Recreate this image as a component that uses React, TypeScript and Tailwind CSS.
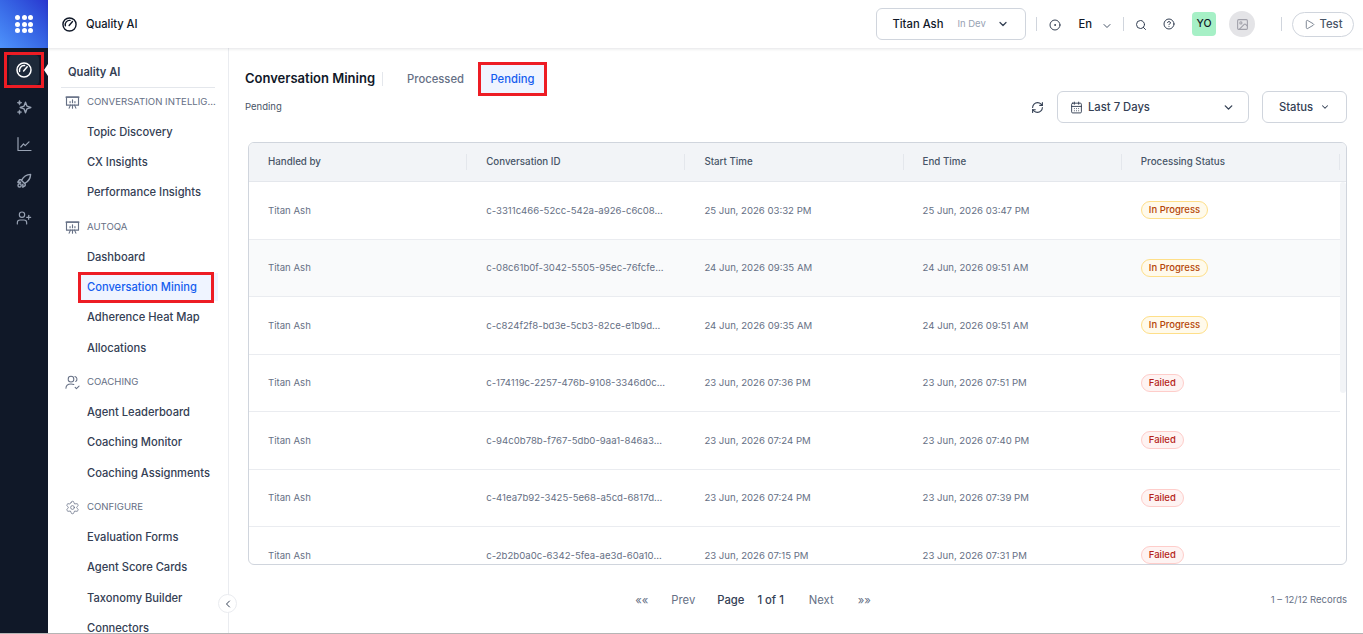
import {
  ChevronDown,
  ChevronLeft,
  CircleDot,
  CircleHelp,
  CalendarDays,
  Image,
  Play,
  RefreshCw,
  Search,
  Settings,
  UserPlus,
} from "lucide-react";

type IconProps = { className?: string };

function GaugeIcon({ className }: IconProps) {
  return (
    <svg viewBox="0 0 16 16" fill="none" stroke="currentColor" strokeWidth="1.5" strokeLinecap="round" className={className}>
      <circle cx="8" cy="8" r="7" />
      <path d="M7.6 9 11.2 4.8" />
      <path d="M3.6 9.4A4.6 4.6 0 0 1 8.6 3.6" />
    </svg>
  );
}

function SparkIcon({ className }: IconProps) {
  return (
    <svg viewBox="0 0 16 16" fill="none" stroke="currentColor" strokeWidth="1.4" strokeLinejoin="round" className={className}>
      <path d="M9.5 3.2 10.9 7.1 14.8 8.5 10.9 9.9 9.5 13.8 8.1 9.9 4.2 8.5 8.1 7.1z" />
      <path d="M3.5 1.2 4.2 3 6 3.7 4.2 4.4 3.5 6.2 2.8 4.4 1 3.7 2.8 3z" fill="currentColor" strokeWidth="0.5" />
      <path d="M3.5 10.8 4.2 12.4 5.8 13.1 4.2 13.8 3.5 15.4 2.8 13.8 1.2 13.1 2.8 12.4z" fill="currentColor" strokeWidth="0.5" />
    </svg>
  );
}

function ChartIcon({ className }: IconProps) {
  return (
    <svg viewBox="0 0 16 16" fill="none" stroke="currentColor" strokeWidth="1.2" strokeLinecap="round" strokeLinejoin="round" className={className}>
      <path d="M2 1.5V14.5H15" />
      <path d="M4.8 11 7.5 7.8 9.2 9.6 13 5.8" />
    </svg>
  );
}

function RocketIcon({ className }: IconProps) {
  return (
    <svg viewBox="0 0 16 16" fill="none" stroke="currentColor" strokeWidth="1.4" strokeLinejoin="round" className={className}>
      <path d="M14.6 1.4C10.4 1.6 7.4 3.6 5.6 7.4L8.6 10.4C12.4 8.6 14.4 5.6 14.6 1.4Z" />
      <path d="M5.8 6.8H3.4L1.8 9.2H5.2" />
      <path d="M9.2 10.2V12.6L6.8 14.2V10.8" />
      <circle cx="3.6" cy="12.4" r="1.6" />
    </svg>
  );
}

function ScreenIcon({ className }: IconProps) {
  return (
    <svg viewBox="0 0 16 16" fill="none" stroke="currentColor" strokeWidth="1.2" strokeLinecap="round" strokeLinejoin="round" className={className}>
      <path d="M1.6 2.2H14.4V10.8H1.6Z" />
      <path d="M1 2.2H15" />
      <path d="M5.4 8.2V7M8 8.2V5M10.6 8.2V7" />
      <path d="M5.8 10.8 4.4 14M8 10.8V14M10.2 10.8 11.6 14" />
    </svg>
  );
}

function CoachIcon({ className }: IconProps) {
  return (
    <svg viewBox="0 0 16 16" fill="none" stroke="currentColor" strokeWidth="1.1" strokeLinecap="round" strokeLinejoin="round" className={className}>
      <circle cx="6.4" cy="4.4" r="3" />
      <path d="M1 14.2C1 11.2 3 9.6 6.4 9.6C7.6 9.6 8.6 9.8 9.4 10.2" />
      <path d="M10.6 1.6A3 3 0 0 1 11.4 7" />
      <path d="M10.8 13.2 12.2 14.6 15 11.8" />
    </svg>
  );
}

const sections = [
  { title: "CONVERSATION INTELLIG...", icon: <ScreenIcon className="w-[15px] h-[15px] shrink-0 text-[#667085]" />, items: ["Topic Discovery", "CX Insights", "Performance Insights"] },
  { title: "AUTOQA", icon: <ScreenIcon className="w-[15px] h-[15px] shrink-0 text-[#667085]" />, items: ["Dashboard", "Conversation Mining", "Adherence Heat Map", "Allocations"] },
  { title: "COACHING", icon: <CoachIcon className="w-[15px] h-[15px] shrink-0 text-[#667085]" />, items: ["Agent Leaderboard", "Coaching Monitor", "Coaching Assignments"] },
  { title: "CONFIGURE", icon: <Settings strokeWidth={1.25} className="w-[15px] h-[15px] shrink-0 text-[#667085]" />, items: ["Evaluation Forms", "Agent Score Cards", "Taxonomy Builder", "Connectors"] },
];

const rows = [
  { id: "c-3311c466-52cc-542a-a926-c6c08...", start: "25 Jun, 2026 03:32 PM", end: "25 Jun, 2026 03:47 PM", status: "In Progress" },
  { id: "c-08c61b0f-3042-5505-95ec-76fcfe...", start: "24 Jun, 2026 09:35 AM", end: "24 Jun, 2026 09:51 AM", status: "In Progress" },
  { id: "c-c824f2f8-bd3e-5cb3-82ce-e1b9d...", start: "24 Jun, 2026 09:35 AM", end: "24 Jun, 2026 09:51 AM", status: "In Progress" },
  { id: "c-174119c-2257-476b-9108-3346d0c...", start: "23 Jun, 2026 07:36 PM", end: "23 Jun, 2026 07:51 PM", status: "Failed" },
  { id: "c-94c0b78b-f767-5db0-9aa1-846a3...", start: "23 Jun, 2026 07:24 PM", end: "23 Jun, 2026 07:40 PM", status: "Failed" },
  { id: "c-41ea7b92-3425-5e68-a5cd-6817d...", start: "23 Jun, 2026 07:24 PM", end: "23 Jun, 2026 07:39 PM", status: "Failed" },
  { id: "c-2b2b0a0c-6342-5fea-ae3d-60a10...", start: "23 Jun, 2026 07:15 PM", end: "23 Jun, 2026 07:31 PM", status: "Failed" },
];

const columns = ["Handled by", "Conversation ID", "Start Time", "End Time", "Processing Status"];

export default function App() {
  return (
    <div className="h-screen flex overflow-hidden bg-white border-b border-[#b5b5b5] font-['Inter',sans-serif]">
      {/* Icon rail */}
      <div className="w-12 shrink-0 bg-[#101828] flex flex-col items-center">
        <div className="w-12 h-12 flex items-center justify-center bg-linear-to-tr from-[#4f93fb] to-[#2a35cf]">
          <div className="grid grid-cols-3 gap-[1.7px]">
            {Array.from({ length: 9 }).map((_, i) => (
              <span key={i} className="w-[5px] h-[5px] rounded-full bg-white" />
            ))}
          </div>
        </div>
        <div className="relative mt-[7px] w-[30px] h-[30px] rounded bg-[#1d2939] flex items-center justify-center text-white">
          <GaugeIcon className="w-4 h-4" />
          <span className="absolute -right-[9px] top-[9px] w-0 h-0 border-y-[6px] border-y-transparent border-r-[4px] border-r-white" />
          <span className="absolute -left-[5px] -top-[3px] w-[40px] h-[36px] border-[3px] border-[#ed1c24]" />
        </div>
        <div className="mt-[3px] h-[37px] flex items-center text-[#98a2b3]"><SparkIcon className="w-4 h-4" /></div>
        <div className="h-[37px] flex items-center text-[#98a2b3]"><ChartIcon className="w-4 h-4" /></div>
        <div className="h-[37px] flex items-center text-[#98a2b3]"><RocketIcon className="w-4 h-4" /></div>
        <div className="h-[37px] flex items-center text-[#98a2b3]"><UserPlus strokeWidth={1.75} className="w-4 h-4" /></div>
      </div>

      <div className="flex-1 min-w-0 flex flex-col">
        {/* Top bar */}
        <div className="relative z-10 h-12 shrink-0 bg-white shadow-[0_1px_3px_rgba(16,24,40,0.12)] flex items-center pl-[14px] pr-[9px]">
          <GaugeIcon className="w-[15px] h-[15px] text-[#101828]" />
          <span className="ml-[9px] pt-[1px] text-[11.15px] font-medium text-[#101828]">Quality AI</span>
          <div className="ml-auto flex items-center">
            <div className="w-[150px] h-8 rounded-md border border-[#d0d5dd] flex items-center pl-[15px] pr-[16px]">
              <span className="pt-[1px] text-[11.25px] font-medium text-[#101828]">Titan Ash</span>
              <span className="ml-[14px] text-[9.5px] text-[#98a2b3]">In Dev</span>
              <ChevronDown strokeWidth={2.5} className="ml-auto w-3 h-3 text-[#344054]" />
            </div>
            <span className="ml-[10px] w-px h-[14px] bg-[#d0d5dd]" />
            <CircleDot className="ml-[12px] mt-[2px] w-3 h-3 text-[#344054]" />
            <span className="ml-[17px] pt-[1px] text-[11.25px] font-medium text-[#101828]">En</span>
            <ChevronDown className="ml-[9px] mt-[3px] w-3 h-3 text-[#475467]" />
            <span className="ml-[10px] w-px h-[14px] bg-[#d0d5dd]" />
            <Search className="ml-[11px] mt-[2px] w-3 h-3 text-[#344054]" />
            <CircleHelp className="ml-[16px] w-3 h-3 text-[#344054]" />
            <div className="ml-[17px] w-6 h-6 rounded bg-[#a6f0c6] flex items-center justify-center text-[10.5px] font-medium text-[#101828]">YO</div>
            <div className="ml-[13px] w-[26px] h-[26px] rounded-full bg-[#e4e4e7] flex items-center justify-center"><Image className="w-[13px] h-[13px] text-[#a1a1aa]" /></div>
            <span className="ml-[26px] w-px h-[14px] bg-[#d0d5dd]" />
            <div className="ml-[10px] w-[62px] h-[25px] rounded-full border border-[#d0d5dd] flex items-center justify-center gap-[5px]">
              <Play strokeWidth={1.5} className="w-[11px] h-[11px] text-[#475467]" />
              <span className="pt-[1px] text-[11.25px] font-medium text-[#475467]">Test</span>
            </div>
          </div>
        </div>

        <div className="flex-1 min-h-0 flex">
          {/* Sidebar */}
          <div className="relative w-[181px] shrink-0 border-r border-[#eaecf0] pt-[12px] px-[13px]">
            <div className="h-[28px] border-b border-[#e4e7ec] pl-[7px] pb-[3px] flex items-center text-[11.15px] font-semibold text-[#344054]">Quality AI</div>
            <div className="pt-[1px]">
              {sections.map((s) => (
                <div key={s.title} className="mb-[6.2px] last:mb-0">
                  <div className="h-[26px] pl-[4px] flex items-center mb-[1.83px]">
                    {s.icon}
                    <span className="ml-[7px] text-[9.6px] text-[#667085] whitespace-nowrap">{s.title}</span>
                  </div>
                  {s.items.map((item) => (
                    <div key={item} className="relative h-[30.33px] flex items-center pl-[26px] whitespace-nowrap text-[11.15px] font-medium text-[#344054]">
                      {item === "Conversation Mining" ? (
                        <>
                          <span className="absolute left-[17px] -right-[3px] top-[1px] bottom-[1px] bg-[#eff4ff]" />
                          <span className="absolute left-[17px] w-[136px] h-[31px] top-0 border-[3px] border-[#ed1c24]" />
                          <span className="relative text-[#155eef]">{item}</span>
                        </>
                      ) : item}
                    </div>
                  ))}
                </div>
              ))}
            </div>
            <div className="absolute -right-[9px] bottom-[20px] w-[19px] h-[19px] rounded-full bg-white border border-[#eaecf0] flex items-center justify-center">
              <ChevronLeft className="w-3 h-3 text-[#344054]" />
            </div>
          </div>

          {/* Main */}
          <div className="flex-1 min-w-0 px-[16px]">
            <div className="flex items-center h-[36px] mt-[13px]">
              <span className="text-[13px] font-semibold text-[#101828]">Conversation Mining</span>
              <span className="ml-[7px] w-px h-[14px] bg-[#e4e7ec]" />
              <span className="ml-[24px] text-[11.25px] font-medium text-[#667085]">Processed</span>
              <div className="ml-[14px] w-[69px] h-[34px] bg-[#eff4ff] border-[3px] border-[#ed1c24] flex items-center justify-center text-[11.25px] font-medium text-[#155eef]">Pending</div>
            </div>
            <div className="flex items-start justify-between h-[45px]">
              <span className="mt-[3px] text-[9.5px] text-[#475467]">Pending</span>
              <div className="flex items-center -mt-[6px]">
                <RefreshCw className="w-[13px] h-[13px] text-[#344054]" />
                <div className="ml-[13px] w-[192px] h-8 rounded-md border border-[#d0d5dd] flex items-center pl-[12px] pr-[13px]">
                  <CalendarDays strokeWidth={1.75} className="w-[13px] h-[13px] text-[#344054]" />
                  <span className="ml-[5px] pt-[1px] text-[11.25px] font-medium text-[#344054]">Last 7 Days</span>
                  <ChevronDown strokeWidth={2.5} className="ml-auto w-[13px] h-[13px] text-[#344054]" />
                </div>
                <div className="ml-[13px] w-[85px] h-8 rounded-md border border-[#d0d5dd] flex items-center justify-center gap-[7px]">
                  <span className="pt-[1px] text-[11.25px] font-medium text-[#344054]">Status</span>
                  <ChevronDown strokeWidth={2.5} className="w-[10px] h-[10px] text-[#344054]" />
                </div>
              </div>
            </div>

            {/* Table */}
            <div className="relative ml-[3px] h-[423px] rounded-md border border-[#d0d5dd] overflow-hidden">
              <div className="grid grid-cols-5 h-[39px] bg-[#f2f4f7] border-b border-[#e4e7ec] items-center pr-[6px]">
                {columns.map((c) => (
                  <div key={c} className="flex items-center h-[16px] pl-[19px] text-[9.75px] font-medium text-[#475467] border-r border-[#e4e7ec]">
                    {c}
                  </div>
                ))}
              </div>
              {rows.map((r, idx) => (
                <div key={r.id} className={`grid grid-cols-5 h-[57.5px] items-center border-b border-[#eaecf0] mr-[6px] ${idx === 1 ? "bg-[#f9fafb]" : ""}`}>
                  <div className="pl-[19px] pt-[1px] text-[9.6px] text-[#667085]">Titan Ash</div>
                  <div className="pl-[19px] pt-[1px] text-[9.6px] text-[#667085] whitespace-nowrap">{r.id}</div>
                  <div className="pl-[19px] pt-[1px] text-[9.6px] text-[#667085]">{r.start}</div>
                  <div className="pl-[19px] pt-[1px] text-[9.6px] text-[#667085]">{r.end}</div>
                  <div className="pl-[19px] flex items-center">
                    {r.status === "Failed" ? (
                      <span className="h-[18px] flex items-center px-[7px] rounded-full border border-[#fecdca] bg-[#fef3f2] text-[9.5px] font-medium text-[#b42318]">{r.status}</span>
                    ) : (
                      <span className="h-[18px] flex items-center px-[7px] rounded-full border border-[#fedf89] bg-[#fffaeb] text-[9.5px] font-medium text-[#b54708]">{r.status}</span>
                    )}
                  </div>
                </div>
              ))}
              <div className="absolute right-0 top-[39px] w-[6px] h-[211px] rounded-full bg-[#f2f4f7]" />
            </div>

            {/* Pagination */}
            <div className="relative h-[68px] pt-[2px] pr-[86px] flex items-center justify-center text-[11.25px] text-[#667085]">
              <span>««</span>
              <span className="ml-[23px]">Prev</span>
              <span className="ml-[22px] font-medium text-[#344054]">Page</span>
              <span className="ml-[13px] font-medium text-[#344054]">1 of 1</span>
              <span className="ml-[25px]">Next</span>
              <span className="ml-[24px]">»»</span>
              <span className="absolute right-0 text-[9.5px] text-[#667085]">1 – 12/12 Records</span>
            </div>
          </div>
        </div>
      </div>
    </div>
  );
}
